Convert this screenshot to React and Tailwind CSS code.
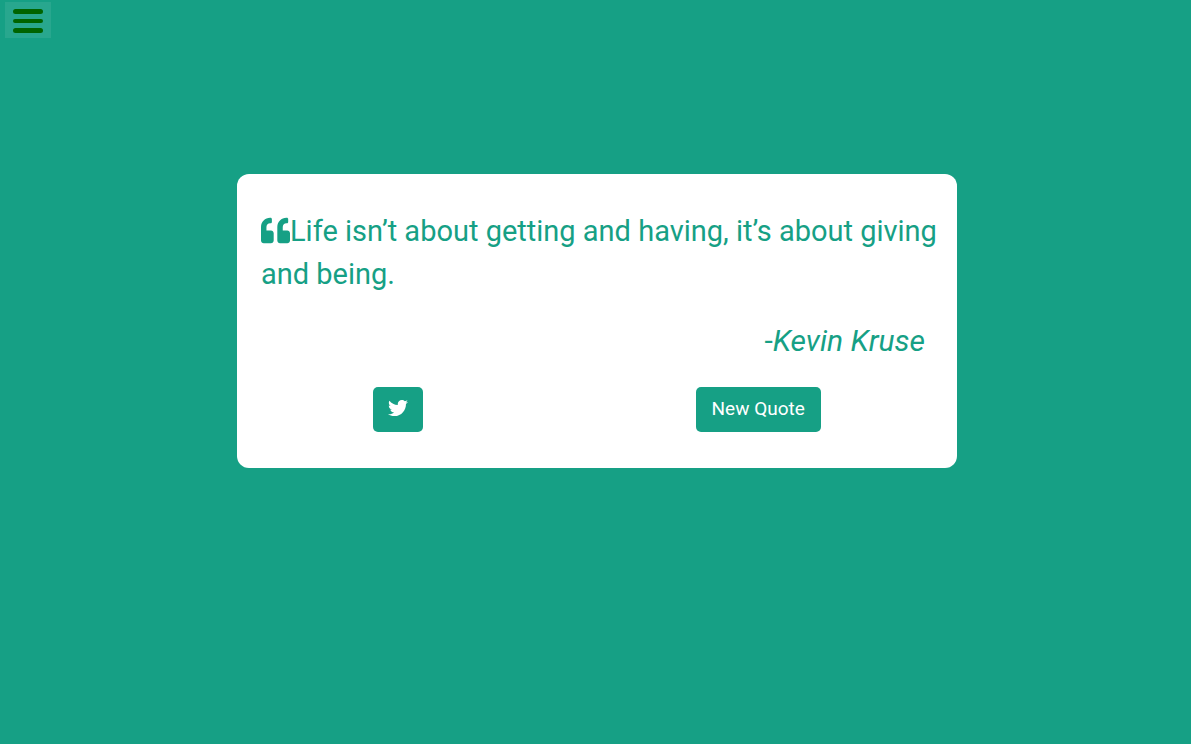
import { FaQuoteLeft, FaTwitter } from "react-icons/fa";

export default function App() {
  return (
    <div className="min-h-screen bg-[#16a085] font-['Roboto',sans-serif] text-[#16a085]">
      <header className="flex h-10 items-start px-[5px] pt-0.5">
        <button
          type="button"
          aria-label="Open menu"
          className="flex h-9 w-[46px] flex-col items-center justify-center gap-[5px] bg-[#28a78e] pt-0.5"
        >
          <span className="h-[5px] w-[30px] rounded-sm bg-[#006400]" />
          <span className="h-1 w-[30px] rounded-sm bg-[#006400]" />
          <span className="h-[5px] w-[30px] rounded-sm bg-[#006400]" />
        </button>
      </header>
      <main className="flex justify-center px-4 pt-[134px]">
        <section className="ml-[3px] w-full max-w-[720px] rounded-xl bg-white py-9">
          <blockquote className="pr-4 pl-6 text-[29px] leading-[43px]">
            <FaQuoteLeft aria-hidden="true" className="inline-block align-[-4px]" />
            Life isn’t about getting and having, it’s about giving and being.
          </blockquote>
          <p className="mt-6 pr-8 text-right text-[30px] leading-[41px]">
            -<cite>Kevin Kruse</cite>
          </p>
          <div className="mt-[26px] flex items-center justify-around">
            <a
              href="#tweet"
              aria-label="Tweet this quote"
              className="flex h-[45px] w-[50px] items-center justify-center rounded-[5px] bg-[#16a085] pb-[3px] text-[20px] text-white"
            >
              <FaTwitter aria-hidden="true" />
            </a>
            <button
              type="button"
              className="h-[45px] rounded-[5px] bg-[#16a085] px-4 text-[19px] text-white"
            >
              New Quote
            </button>
          </div>
        </section>
      </main>
    </div>
  );
}
